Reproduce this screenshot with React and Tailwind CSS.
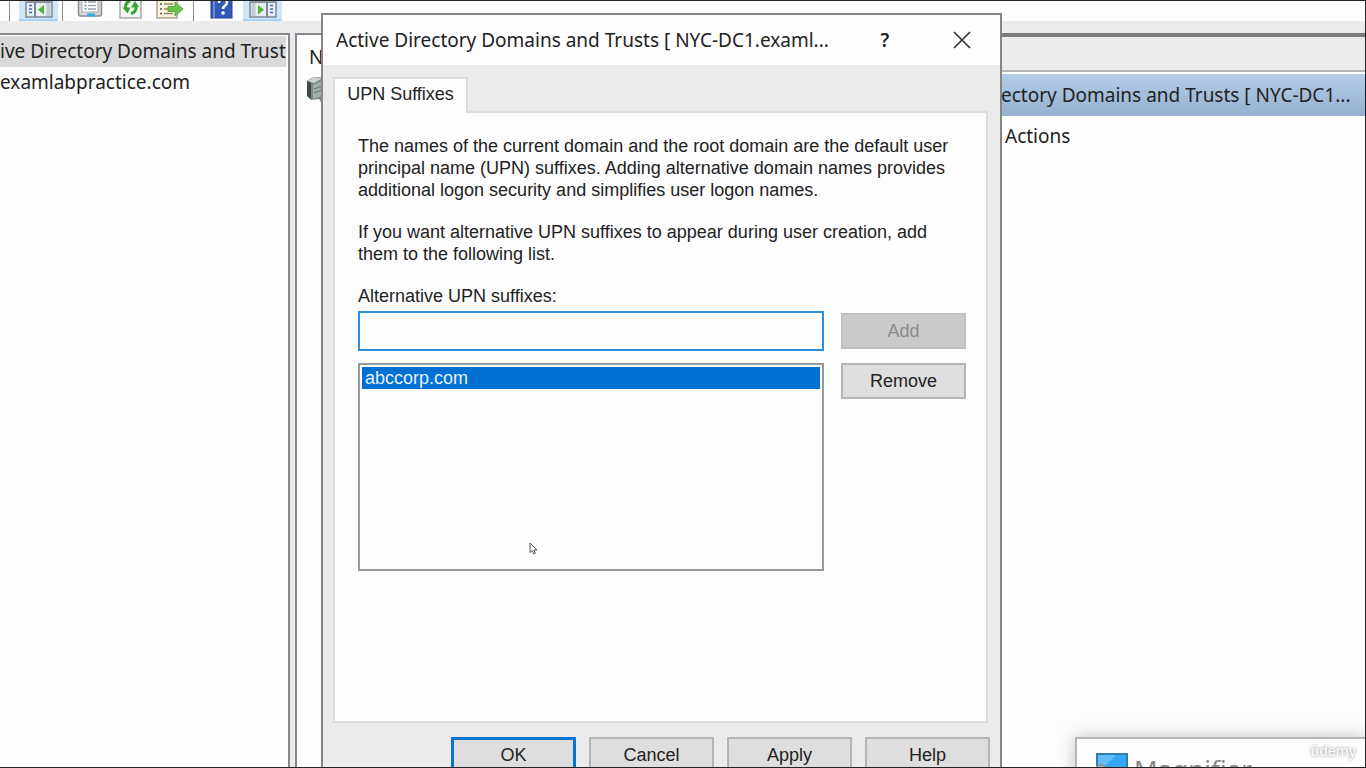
import React, { useState } from "react";

const PaneIcon = ({ flip }) => (
  <svg width="28" height="22" viewBox="0 0 28 22" className={flip ? "-scale-x-100" : ""}>
    <rect x="1" y="1" width="26" height="20" fill="#e9edf2" stroke="#7d8794" strokeWidth="1.5" />
    <rect x="1" y="1" width="26" height="6" fill="#8d97a3" />
    <path d="M10 6v15" stroke="#7d8794" strokeWidth="2" />
    <path d="M4 9.500h3M4 13h3M4 16.500h3" stroke="#3f6fae" strokeWidth="1.500" />
    <path d="M19 9v9.500l-6-4.750z" fill="#4fb53a" />
    <path d="M23.500 7v13" stroke="#c3cad2" strokeWidth="4" />
  </svg>
);

const PropertiesIcon = () => (
  <svg width="26" height="24" viewBox="0 0 26 24">
    <rect x="1.500" y="1" width="23" height="20" rx="2" fill="#d5d7da" stroke="#8c9094" strokeWidth="1.500" />
    <rect x="5" y="3" width="16" height="14" fill="#fff" stroke="#a5a9ad" />
    <path d="M7.500 7h2M7.500 10.500h2M7.500 14h2" stroke="#6c8fb5" strokeWidth="1.500" />
    <path d="M11 7h8M11 10.500h8M11 14h8" stroke="#9aa2aa" strokeWidth="1.500" />
    <path d="M10 20h8" stroke="#2fb1e6" strokeWidth="3" />
  </svg>
);

const RefreshIcon = () => (
  <svg width="23" height="24" viewBox="0 0 23 24">
    <rect x="1" y="1" width="21" height="22" fill="#f4f4f2" stroke="#a9a9a5" strokeWidth="1.500" />
    <path d="M11 6a6 6 0 0 0-4 8" fill="none" stroke="#36a52f" strokeWidth="3" />
    <path d="M3.500 12.500h8l-3 6z" fill="#36a52f" />
    <path d="M12 18.500a6 6 0 0 0 5-7" fill="none" stroke="#36a52f" strokeWidth="3" />
    <path d="M12 12.500l8-.500-4-6z" fill="#36a52f" />
  </svg>
);

const ExportIcon = () => (
  <svg width="28" height="24" viewBox="0 0 28 24">
    <rect x="1" y="1" width="20" height="22" fill="#faf3d9" stroke="#a9a493" strokeWidth="1.500" />
    <path d="M4 9h2M4 14h2M4 18.500h2" stroke="#555" strokeWidth="1.500" />
    <path d="M8 9h9M8 14h6M8 18.500h9" stroke="#8f8a78" strokeWidth="1.500" />
    <path d="M12 11.500h7V7l8 7-8 7v-4.500h-7z" fill="#6cc24a" stroke="#5fa846" />
  </svg>
);

const HelpIcon = () => (
  <svg width="23" height="24" viewBox="0 0 23 24">
    <rect x="1" y="1" width="21" height="22" fill="#3358b8" stroke="#25408c" />
    <path d="M4 1v22" stroke="#6d8bd6" strokeWidth="2" />
    <path d="M9 8c0-5 8-5 8-.500 0 3-4 3-4 6.500" fill="none" stroke="#fff" strokeWidth="2.500" />
    <circle cx="13" cy="18" r="1.800" fill="#fff" />
  </svg>
);

const ServerIcon = () => (
  <svg width="28" height="28" viewBox="0 0 28 28">
    <path d="M0 6l6-4 20 0v20l-5 5-7 0-2-3-8 1-4-4z" fill="#7e8a86" />
    <path d="M0 6l4 2v16l-4-3z" fill="#3e4845" />
    <path d="M6 10l9-4v15l-9 3z" fill="#a3afab" />
    <path d="M1 6l5-4 10 1-9 5z" fill="#cbd2d0" />
    <path d="M7 14l8-3M7 18l8-3" stroke="#68736f" />
  </svg>
);

const Separator = () => <div className="h-full w-px bg-[#8a8a8a]" />;

const Toolbar = () => (
  <div className="flex h-5 shrink-0 items-end bg-[#fdfdfd] pl-[9px]">
    <Separator />
    <button aria-label="Show console tree" className="ml-[9px] flex h-5 w-[39px] items-end justify-center border-b-2 border-[#a9d3f2] bg-[#cfe6f8] pb-[1px]">
      <PaneIcon />
    </button>
    <div className="ml-1 flex h-full w-px">
      <Separator />
    </div>
    <button aria-label="Properties" className="ml-[14px] pb-[2px]">
      <PropertiesIcon />
    </button>
    <button aria-label="Refresh" className="ml-4 pb-[2px]">
      <RefreshIcon />
    </button>
    <button aria-label="Export list" className="ml-[14px] pb-[2px]">
      <ExportIcon />
    </button>
    <div className="ml-[9px] flex h-full w-px">
      <Separator />
    </div>
    <button aria-label="Help topics" className="ml-4 pb-[2px]">
      <HelpIcon />
    </button>
    <button aria-label="Show action pane" className="ml-[10px] flex h-5 w-[39px] items-end justify-center border-b-2 border-[#a9d3f2] bg-[#cfe6f8] pb-[1px]">
      <PaneIcon flip />
    </button>
  </div>
);

const DialogButton = ({ children, primary, disabled }) => (
  <button
    disabled={disabled}
    className={
      primary
        ? "h-9 w-[125px] border-3 border-[#0a74d1] bg-[#dedede]"
        : "h-9 w-[125px] border-2 border-[#b4b4b4] bg-[#dedede] disabled:border-[#c0c0c0] disabled:bg-[#cacaca] disabled:text-[#8b8b8b]"
    }
  >
    {children}
  </button>
);

const UpnDialog = () => {
  const [suffix, setSuffix] = useState("");
  const suffixes = ["abccorp.com"];

  return (
    <div
      role="dialog"
      aria-labelledby="dialog-title"
      className="absolute top-3 left-[321px] w-[681px] border-2 border-[#858585] bg-[#ebebeb] font-['Liberation_Sans',Arial,sans-serif] text-[18px] leading-[22px] text-[#222]"
    >
      {/* Title bar */}
      <div className="flex h-[50px] items-center bg-[#fdfdfd] pl-[13px] font-['Noto_Sans',sans-serif] text-[19px]">
        <h1 id="dialog-title" className="grow whitespace-nowrap">
          Active Directory Domains and Trusts [ NYC-DC1.examl...
        </h1>
        <button aria-label="Help" className="w-10 font-semibold">
          ?
        </button>
        <button aria-label="Close" className="mr-[29px] ml-12">
          <svg width="18" height="18" viewBox="0 0 18 18">
            <path d="M1 1l16 16M17 1L1 17" stroke="#333" strokeWidth="1.700" />
          </svg>
        </button>
      </div>

      <div className="px-[10px] pt-3">
        <div role="tablist" className="flex">
          <button role="tab" aria-selected="true" className="z-10 -mb-[2px] h-9 w-[135px] border-2 border-b-0 border-[#dcdcdc] bg-[#fdfdfd] pb-1">
            UPN Suffixes
          </button>
        </div>
        <div role="tabpanel" className="mr-[2px] h-[612px] border-2 border-[#dcdcdc] bg-[#fdfdfd] pt-[22px] pr-5 pl-[23px]">
          <p className="whitespace-nowrap">
            The names of the current domain and the root domain are the default user
            <br />
            principal name (UPN) suffixes. Adding alternative domain names provides
            <br />
            additional logon security and simplifies user logon names.
          </p>
          <p className="mt-5 whitespace-nowrap">
            If you want alternative UPN suffixes to appear during user creation, add
            <br />
            them to the following list.
          </p>
          <label htmlFor="suffix" className="mt-5 block">
            Alternative UPN suffixes:
          </label>
          <div className="mt-1 flex items-center gap-[17px]">
            <input
              id="suffix"
              value={suffix}
              onChange={(e) => setSuffix(e.target.value)}
              className="h-10 min-w-0 grow border-2 border-[#2e8fd8] bg-[#fdfdfd] px-1 outline-none"
            />
            <DialogButton disabled>Add</DialogButton>
          </div>
          <div className="mt-3 flex items-start gap-[17px]">
            <ul role="listbox" aria-label="Alternative UPN suffixes" className="h-[208px] grow border-2 border-[#969a9e] p-[2px]">
              {suffixes.map((name) => (
                <li key={name} role="option" aria-selected="true" className="bg-[#0071d2] pl-[3px] text-[#e6f2fc]">
                  {name}
                </li>
              ))}
            </ul>
            <DialogButton>Remove</DialogButton>
          </div>
        </div>
        <div className="flex justify-end gap-[13px] py-[14px]">
          <DialogButton primary>OK</DialogButton>
          <DialogButton>Cancel</DialogButton>
          <DialogButton>Apply</DialogButton>
          <DialogButton>Help</DialogButton>
        </div>
      </div>
    </div>
  );
};

const MagnifierWindow = () => (
  <div className="absolute top-[736px] right-0 left-[1075px] flex h-24 items-start border-2 border-r-0 border-[#b5b5b5] bg-[#fdfdfd] pt-[14px] pl-[19px] shadow-[0_0_16px_rgba(0,0,0,0.25)]">
    <svg width="32" height="32" viewBox="0 0 32 32">
      <rect x="1" y="1" width="30" height="26" fill="#35a7f5" stroke="#2f7fa8" strokeWidth="2" />
      <path d="M2 2h18L2 20z" fill="#62bdfa" />
      <circle cx="5" cy="18" r="6" fill="#a9cfe6" stroke="#8a9399" strokeWidth="2" />
    </svg>
    <span className="ml-[6px] text-[26px] leading-8 text-[#8a8a8a]">Magnifier</span>
  </div>
);

const App = () => {
  return (
    <div className="relative flex h-screen flex-col overflow-hidden border-y border-r border-[#232225] bg-[#ebebeb] font-['Noto_Sans',sans-serif] text-[19px] text-[#222]">
      <Toolbar />

      <div className="flex min-h-0 grow pt-3">
        {/* Console tree */}
        <div className="w-[290px] shrink-0 border-t-2 border-r-2 border-[#85888f] bg-[#fdfdfd] pt-[1px] pr-[2px]">
          <div className="h-[31px] overflow-hidden bg-[#d9d9d9] leading-[31px] whitespace-nowrap">ive Directory Domains and Trust</div>
          <div className="h-[31px] leading-[31px]">examlabpractice.com</div>
        </div>

        {/* Result list */}
        <div className="ml-[5px] grow border-t-2 border-l-2 border-[#85888f] bg-[#fdfdfd] pl-[10px]">
          <div className="pt-1 pl-[2px] leading-9">N</div>
          <ServerIcon />
        </div>

        {/* Actions */}
        <div className="w-[364px] shrink-0 border-t-4 border-[#7b7b7b] bg-[#fdfdfd]">
          <div className="h-[35px] border-b-2 border-[#b4b4b4] bg-[#ebebeb]" />
          <div className="mt-[2px] h-[42px] bg-gradient-to-b from-[#b3cde8] to-[#94b1d0] leading-[42px] whitespace-nowrap">
            ectory Domains and Trusts [ NYC-DC1...
          </div>
          <div className="pl-1 leading-10">Actions</div>
        </div>
      </div>

      <UpnDialog />
      <MagnifierWindow />

      {/* Mouse pointer */}
      <svg className="absolute top-[541px] left-[529px]" width="9" height="13" viewBox="0 0 9 13">
        <path d="M1 1v9.500l2.300-2 1.600 3.500 1.500-.700-1.500-3.300H8z" fill="#fff" stroke="#555" />
      </svg>

      <span className="absolute right-[9px] bottom-[6px] text-[14px] leading-5 text-white [text-shadow:0_0_3px_#777]">ûdemy</span>
    </div>
  );
};

export default App;
